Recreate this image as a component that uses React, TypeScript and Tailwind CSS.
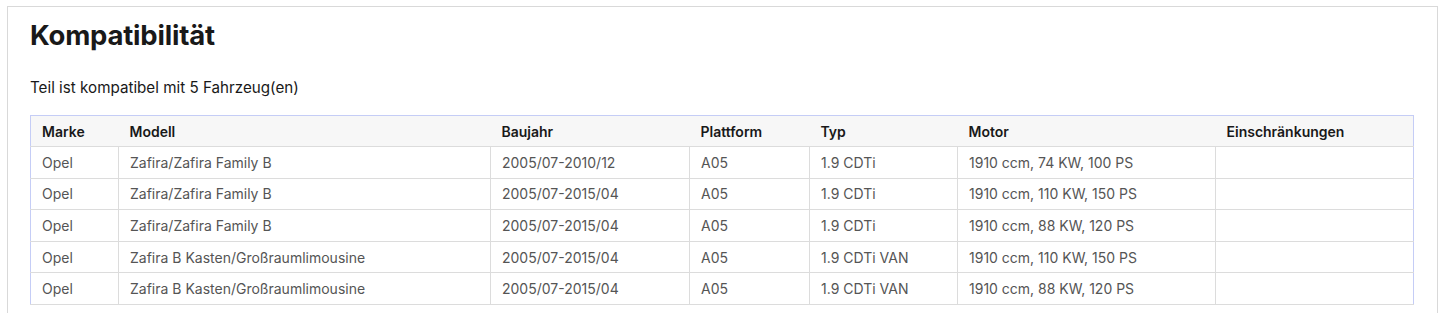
import React from 'react';

const rows = [
  ['Opel', 'Zafira/Zafira Family B', '2005/07-2010/12', 'A05', '1.9 CDTi', '1910 ccm, 74 KW, 100 PS', ''],
  ['Opel', 'Zafira/Zafira Family B', '2005/07-2015/04', 'A05', '1.9 CDTi', '1910 ccm, 110 KW, 150 PS', ''],
  ['Opel', 'Zafira/Zafira Family B', '2005/07-2015/04', 'A05', '1.9 CDTi', '1910 ccm, 88 KW, 120 PS', ''],
  ['Opel', 'Zafira B Kasten/Großraumlimousine', '2005/07-2015/04', 'A05', '1.9 CDTi VAN', '1910 ccm, 110 KW, 150 PS', ''],
  ['Opel', 'Zafira B Kasten/Großraumlimousine', '2005/07-2015/04', 'A05', '1.9 CDTi VAN', '1910 ccm, 88 KW, 120 PS', ''],
];

const headers = ['Marke', 'Modell', 'Baujahr', 'Plattform', 'Typ', 'Motor', 'Einschränkungen'];
const widths = ['w-[88px]', 'w-[372px]', 'w-[199px]', 'w-[120px]', 'w-[148px]', 'w-[258px]', ''];

export default function App() {
  return (
    <div className="bg-white h-[313px] overflow-hidden pt-[6px] px-[7px] font-['Inter',sans-serif]">
      <div className="border border-[#d9d9d9] border-b-0 pl-[22px] pr-[23px] pt-[12px] h-[320px]">
        <h2 className="text-[27.5px] font-bold text-[#191919] leading-[32px] tracking-[-0.2px]">Kompatibilität</h2>
        <p className="text-[15.2px] text-[#191919] mt-[27px] leading-[20px]">Teil ist kompatibel mit 5 Fahrzeug(en)</p>
        <table className="mt-[17px] w-full border-collapse border border-[#c5cdf6] text-[14px] table-fixed">
          <thead>
            <tr className="bg-[#f7f7f7] h-[31px]">
              {headers.map((h, i) => (
                <th
                  key={h}
                  className={`${widths[i]} text-left font-semibold text-[#191919] px-[11px] border-b border-[#dcdcdc]`}
                >
                  {h}
                </th>
              ))}
            </tr>
          </thead>
          <tbody>
            {rows.map((r, ri) => (
              <tr key={ri} className="h-[31.6px]">
                {r.map((c, ci) => (
                  <td
                    key={ci}
                    className={`px-[11px] text-[#555555] border-b border-[#dcdcdc] ${ci > 0 ? 'border-l' : ''}`}
                  >
                    {c}
                  </td>
                ))}
              </tr>
            ))}
          </tbody>
        </table>
      </div>
    </div>
  );
}
